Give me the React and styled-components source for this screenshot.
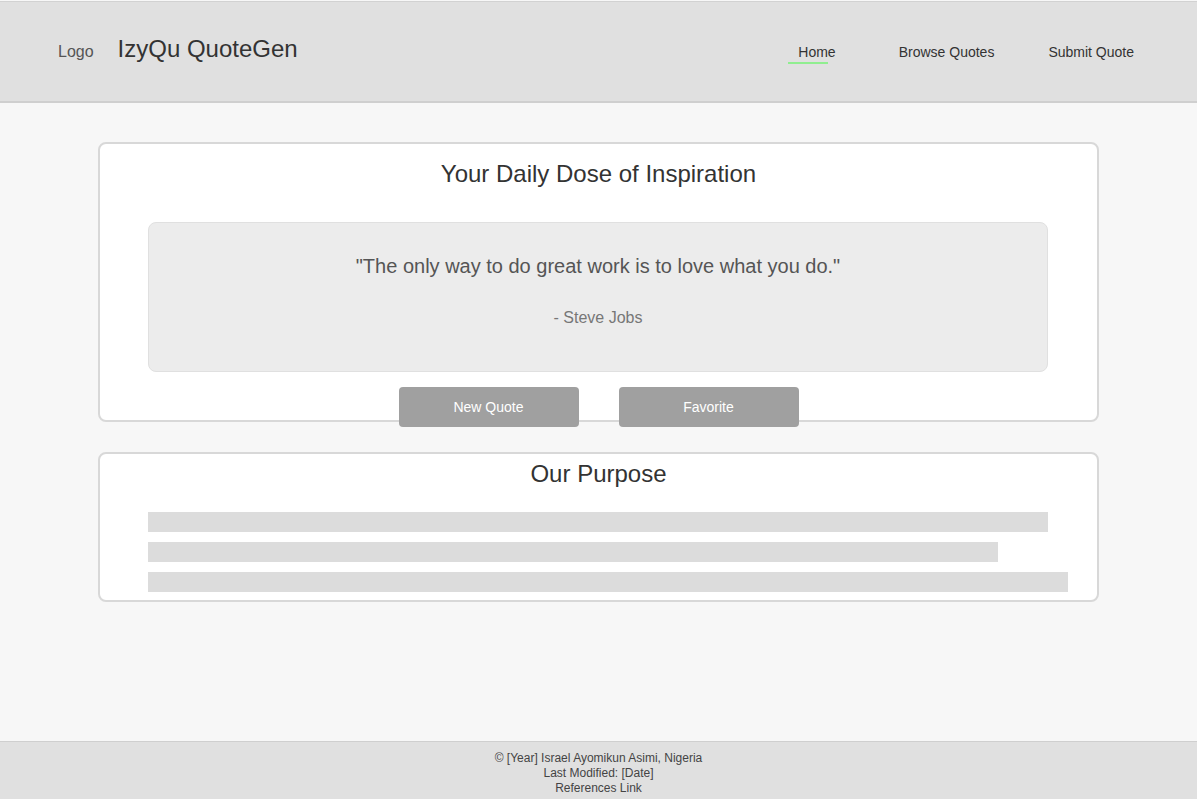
import styled, { createGlobalStyle } from "styled-components"

const GlobalStyle = createGlobalStyle`
  html, body {
    margin: 0;
    padding: 0;
    background: #f7f7f7;
    font-family: "Liberation Sans", Arial, sans-serif;
  }
  * { box-sizing: border-box; }
`

const navLinks = [
  { label: "Home", active: true, space: 0 },
  { label: "Browse Quotes", space: 43 },
  { label: "Submit Quote", space: 34 },
]

const bars = [900, 850, 920]

export default function App() {
  return (
    <Page>
      <GlobalStyle />
      <Header>
        <Brand>
          <LogoText>Logo</LogoText>
          <SiteTitle>IzyQu QuoteGen</SiteTitle>
        </Brand>
        <Nav>
          {navLinks.map((l) => (
            <NavLink key={l.label} $active={l.active} $space={l.space}>{l.label}</NavLink>
          ))}
        </Nav>
      </Header>

      <Main>
        <Card $height={280} $top={16}>
          <CardTitle>Your Daily Dose of Inspiration</CardTitle>
          <QuoteBox>
            <QuoteText>"The only way to do great work is to love what you do."</QuoteText>
            <Author>- Steve Jobs</Author>
          </QuoteBox>
          <ButtonRow>
            <Button>New Quote</Button>
            <Button>Favorite</Button>
          </ButtonRow>
        </Card>

        <Card $height={150} $top={6}>
          <CardTitle>Our Purpose</CardTitle>
          <Bars>
            {bars.map((w, i) => (
              <Bar key={i} style={{ width: w }} />
            ))}
          </Bars>
        </Card>
      </Main>

      <Footer>
        <div>© [Year] Israel Ayomikun Asimi, Nigeria</div>
        <div>Last Modified: [Date]</div>
        <div>References Link</div>
      </Footer>
    </Page>
  )
}

const Page = styled.div`
  min-height: 100vh;
  display: flex;
  flex-direction: column;
  padding-top: 1px;
`

const Header = styled.header`
  display: flex;
  align-items: center;
  justify-content: space-between;
  height: 102px;
  background: #e0e0e0;
  border-top: 1px solid #d2d2d2;
  border-bottom: 2px solid #cfcfcf;
  padding: 0 53px 0 58px;
`

const Brand = styled.div`
  display: flex;
  align-items: center;
  gap: 24px;
  margin-top: -5px;
`

const LogoText = styled.span`
  font-size: 16px;
  color: #555;
  margin-top: 5px;
`

const SiteTitle = styled.h1`
  margin: 0;
  font-size: 24px;
  font-weight: normal;
  color: #333;
`

const Nav = styled.nav`
  display: flex;
  align-items: center;
  margin-top: 1px;
`

const NavLink = styled.a`
  position: relative;
  padding: 0 10px;
  margin-left: ${(p) => p.$space}px;
  font-size: 14px;
  line-height: 16px;
  color: #333;
  text-decoration: none;
  cursor: pointer;

  &::after {
    content: "";
    display: ${(p) => (p.$active ? "block" : "none")};
    position: absolute;
    left: 0;
    bottom: -4px;
    width: 40px;
    height: 2px;
    background: #90ee90;
  }
`

const Main = styled.main`
  flex: 1;
  display: flex;
  flex-direction: column;
  align-items: center;
  gap: 30px;
  padding-top: 39px;
`

const Card = styled.section`
  width: 1001px;
  height: ${(p) => p.$height}px;
  background: #fff;
  border: 2px solid #d8d8d8;
  border-radius: 8px;
  padding: ${(p) => p.$top}px 48px 0;
  display: flex;
  flex-direction: column;
  align-items: flex-start;
`

const CardTitle = styled.h2`
  align-self: stretch;
  margin: 0;
  text-align: center;
  font-size: 24px;
  line-height: 28px;
  font-weight: normal;
  color: #333;
`

const QuoteBox = styled.div`
  flex-shrink: 0;
  width: 900px;
  height: 150px;
  margin-top: 34px;
  background: #ececec;
  border: 1px solid #e0e0e0;
  border-radius: 8px;
  padding-top: 32px;
  text-align: center;
`

const QuoteText = styled.p`
  margin: 0;
  font-size: 20px;
  line-height: 23px;
  color: #555;
`

const Author = styled.p`
  margin: 31px 0 0;
  font-size: 16px;
  line-height: 18px;
  color: #777;
`

const ButtonRow = styled.div`
  flex-shrink: 0;
  align-self: stretch;
  display: flex;
  justify-content: center;
  gap: 40px;
  margin-top: 15px;
`

const Button = styled.button`
  width: 180px;
  height: 40px;
  border: none;
  border-radius: 4px;
  background: #a0a0a0;
  color: #fff;
  font-family: "Liberation Sans", Arial, sans-serif;
  font-size: 14px;
  cursor: pointer;
`

const Bars = styled.div`
  flex-shrink: 0;
  display: flex;
  flex-direction: column;
  gap: 10px;
  margin-top: 24px;
`

const Bar = styled.div`
  height: 20px;
  background: #dcdcdc;
`

const Footer = styled.footer`
  background: #e0e0e0;
  border-top: 1px solid #cfcfcf;
  padding: 9px 0 3px;
  text-align: center;
  font-size: 12px;
  line-height: 15px;
  color: #444;
`
